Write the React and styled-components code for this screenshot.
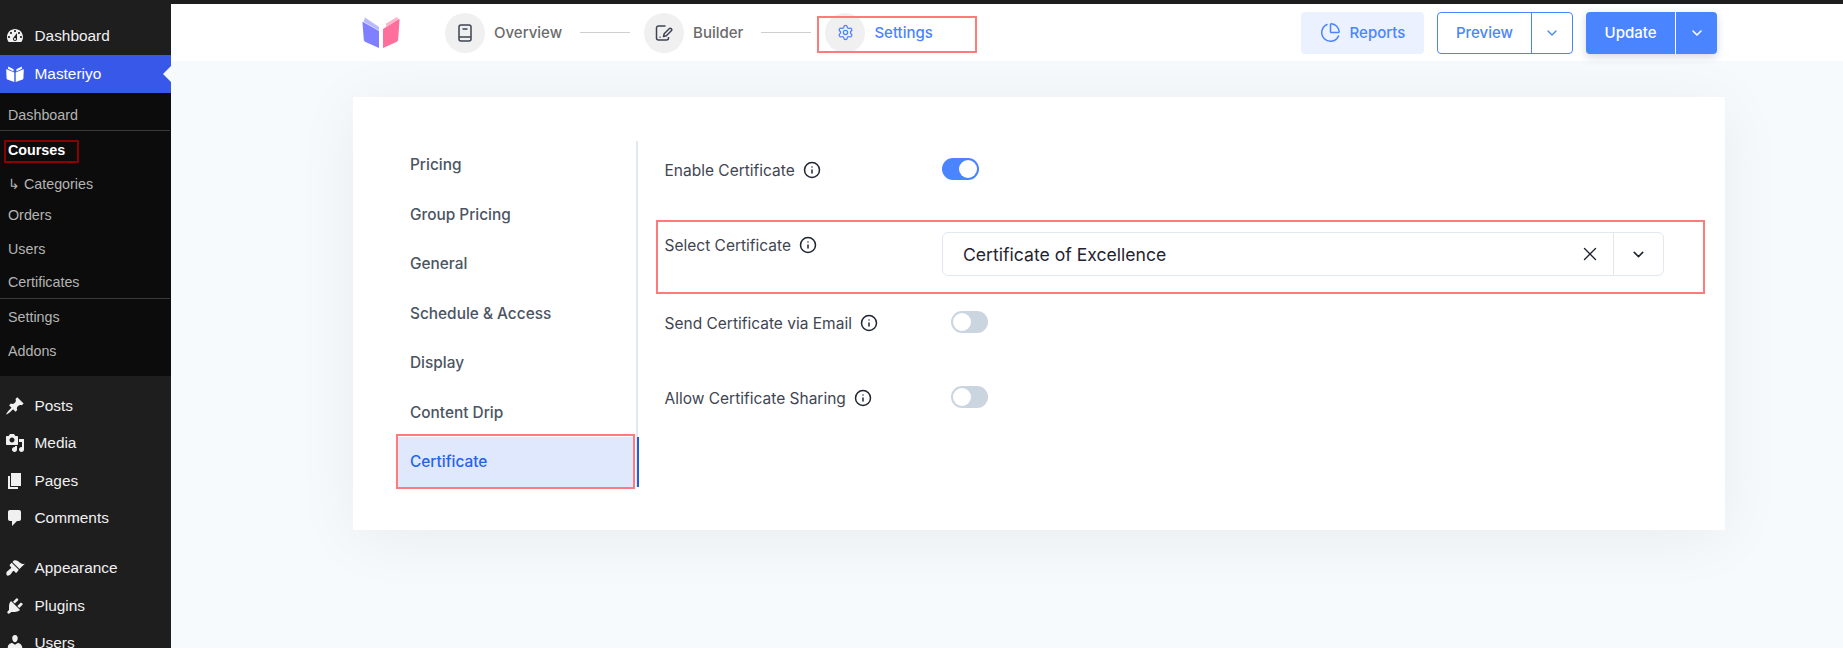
import React from "react";
import styled, { createGlobalStyle } from "styled-components";
import { ChartPie, ChevronDown, Info, Settings, X } from "lucide-react";

const GlobalStyle = createGlobalStyle`
  html, body {
    margin: 0;
    padding: 0;
    height: 100%;
    overflow: hidden;
    background: #f6fafd;
    font-family: "Inter", "Liberation Sans", sans-serif;
  }
  * {
    box-sizing: border-box;
  }
`;

const Page = styled.div`
  display: flex;
  height: 648px;
  overflow: hidden;
`;

/* wp admin menu */
const Sidebar = styled.nav`
  width: 171px;
  flex-shrink: 0;
  background: #1e1e1e;
  padding-top: 17.5px;
  font-family: "Liberation Sans", Arial, sans-serif;
`;

const MenuItem = styled.div`
  position: relative;
  height: ${(props) => props.$height || 37.5}px;
  margin-top: ${(props) => props.$gap || 0}px;
  display: flex;
  align-items: center;
  gap: 9.5px;
  padding-left: 5px;
  font-size: 15.4px;
  color: ${(props) => (props.$active ? "#ffffff" : "#f0f0f1")};
  background: ${(props) => (props.$active ? "#3858e9" : "transparent")};
`;

const MenuIcon = styled.svg`
  width: 20px;
  height: 20px;
  flex-shrink: 0;
  fill: currentColor;
`;

const ActiveArrow = styled.span`
  position: absolute;
  right: 0;
  top: 50%;
  margin-top: -8px;
  border: 8px solid transparent;
  border-right-color: #f6fafd;
  border-left-width: 0;
`;

const SubMenu = styled.div`
  background: #0c0c0c;
  padding: 7px 0 10px;
  margin-bottom: 11px;
`;

const SubItem = styled.div`
  position: relative;
  height: ${(props) => props.$height}px;
  display: flex;
  align-items: center;
  padding-left: 8px;
  font-size: 14.3px;
  font-weight: ${(props) => (props.$current ? 700 : 400)};
  color: ${(props) => (props.$current ? "#ffffff" : "#b4b4b4")};
  border-bottom: ${(props) => (props.$divider ? "1px solid #3c3c3c" : "none")};
  margin-right: ${(props) => (props.$divider ? "1px" : 0)};
`;

const DarkMark = styled.span`
  position: absolute;
  left: 4px;
  top: 9px;
  width: 75px;
  height: 23px;
  border: 2px solid #8b0000;
  border-radius: 1px;
`;

/* right side */
const Main = styled.div`
  flex: 1;
  min-width: 0;
  border-top: 4px solid #1e1e1e;
`;

const Header = styled.header`
  position: relative;
  height: 57px;
  background: #ffffff;
  display: flex;
  align-items: center;
  padding: 0 126px 0 191px;
`;

const Logo = styled.svg`
  width: 38px;
  height: 31px;
  flex-shrink: 0;
  margin-right: 45px;
`;

const Steps = styled.div`
  display: flex;
  align-items: center;
  flex: 1;
`;

const Step = styled.div`
  position: relative;
  display: flex;
  align-items: center;
  gap: 9px;
  font-size: 15px;
  font-weight: 500;
  color: ${(props) => (props.$active ? "#4a84ff" : "#6b6b6b")};
`;

const StepCircle = styled.span`
  width: 40px;
  height: 40px;
  flex-shrink: 0;
  border-radius: 50%;
  background: #f0f0f0;
  display: flex;
  align-items: center;
  justify-content: center;
  color: ${(props) => (props.$active ? "#4a84ff" : "#3d4450")};
`;

const StepLine = styled.span`
  width: 50px;
  height: 1px;
  background: #cfcfcf;
  margin: 0 14px 0 18px;
`;

const SettingsMark = styled.span`
  position: absolute;
  left: -8px;
  top: 3px;
  width: 160px;
  height: 37px;
  border: 2px solid #ff7b7b;
`;

const Actions = styled.div`
  display: flex;
  align-items: center;
  gap: 13px;
`;

const ReportsButton = styled.div`
  width: 123px;
  height: 42px;
  margin-top: 1px;
  padding-bottom: 1px;
  border-radius: 4px;
  background: #ebf1fe;
  color: #4a84ff;
  display: flex;
  align-items: center;
  justify-content: center;
  gap: 9px;
  font-size: 15px;
  font-weight: 500;
`;

const SplitButton = styled.div`
  height: 42px;
  margin-top: 1px;
  display: flex;
  border-radius: 4px;
  overflow: hidden;
  font-size: 15px;
  font-weight: 500;
  border: ${(props) => (props.$solid ? "none" : "1px solid #4a84ff")};
  background: ${(props) => (props.$solid ? "#4a84ff" : "#ffffff")};
  color: ${(props) => (props.$solid ? "#ffffff" : "#4a84ff")};
  box-shadow: ${(props) =>
    props.$solid ? "0 3px 8px rgba(40, 60, 110, 0.2)" : "none"};
`;

const SplitLabel = styled.span`
  width: ${(props) => props.$width}px;
  padding-bottom: 2px;
  display: flex;
  align-items: center;
  justify-content: center;
  border-right: 1px solid ${(props) => (props.$solid ? "#ffffff" : "#4a84ff")};
`;

const SplitArrow = styled.span`
  width: ${(props) => props.$width}px;
  display: flex;
  align-items: center;
  justify-content: center;
`;

const Content = styled.main`
  padding: 36px 118px 0 182px;
`;

const Card = styled.section`
  height: 433px;
  background: #ffffff;
  display: flex;
  padding: 44px 61px 43px 45px;
  box-shadow: 0 8px 60px rgba(0, 0, 0, 0.06);
`;

const Tabs = styled.div`
  width: 240px;
  flex-shrink: 0;
  border-right: 2px solid #e2e8f0;
`;

const TabList = styled.div`
  margin-top: -1px;
`;

const Tab = styled.div`
  position: relative;
  height: 49.5px;
  width: 236px;
  display: flex;
  align-items: center;
  padding-left: 12px;
  font-size: 15.4px;
  font-weight: 500;
  color: ${(props) => (props.$active ? "#2563eb" : "#4b5563")};
  background: ${(props) => (props.$active ? "#dfe8fc" : "transparent")};
`;

const TabBar = styled.span`
  position: absolute;
  left: 239px;
  top: 0;
  width: 2px;
  height: 100%;
  background: #1d5fe0;
`;

const TabMark = styled.span`
  position: absolute;
  left: -2px;
  top: -3px;
  width: 239px;
  height: 55px;
  border: 2px solid #ff7b7b;
`;

const Fields = styled.div`
  flex: 1;
  padding: 16px 0 0 26.5px;
`;

const Field = styled.div`
  position: relative;
  display: flex;
  align-items: ${(props) => (props.$top ? "flex-start" : "center")};
  margin-bottom: ${(props) => props.$after || 0}px;
`;

const FieldLabel = styled.div`
  width: ${(props) => props.$width || 277}px;
  height: 24px;
  padding-top: 2px;
  flex-shrink: 0;
  display: flex;
  align-items: center;
  gap: 8.5px;
  font-size: 15.5px;
  color: #3f4652;
`;

const InfoIcon = styled(Info)`
  width: 18px;
  height: 18px;
  color: #1f2430;
  flex-shrink: 0;
`;

const Toggle = styled.span`
  position: relative;
  width: 37px;
  height: 22px;
  border-radius: 11px;
  background: ${(props) => (props.$on ? "#4a84ff" : "#cbd5e0")};
  &::after {
    content: "";
    position: absolute;
    top: 2px;
    left: ${(props) => (props.$on ? "17px" : "2px")};
    width: 18px;
    height: 18px;
    border-radius: 50%;
    background: #ffffff;
  }
`;

const Select = styled.div`
  flex: 1;
  height: 44px;
  border: 1px solid #e2e8f0;
  border-radius: 6px;
  display: flex;
  align-items: center;
  padding-left: 20.5px;
  font-size: 17.6px;
  color: #1f2430;
`;

const SelectValue = styled.span`
  flex: 1;
`;

const SelectClear = styled.span`
  width: 52px;
  height: 100%;
  display: flex;
  align-items: center;
  justify-content: center;
  padding-left: 6px;
  color: #1f2430;
`;

const SelectArrow = styled.span`
  width: 50px;
  height: 100%;
  display: flex;
  align-items: center;
  justify-content: center;
  border-left: 1px solid #e2e8f0;
  color: #1f2430;
`;

const SelectMark = styled.span`
  position: absolute;
  left: -9px;
  top: -12px;
  right: -41px;
  bottom: -18px;
  border: 2px solid #ff7b7b;
  pointer-events: none;
`;

const icons = {
  dashboard:
    "M3.76 16h12.48c1.1-1.37 1.76-3.11 1.76-5 0-4.42-3.58-8-8-8s-8 3.58-8 8c0 1.89.66 3.63 1.76 5zM10 4c.55 0 1 .45 1 1s-.45 1-1 1-1-.45-1-1 .45-1 1-1zM6 6c.55 0 1 .45 1 1s-.45 1-1 1-1-.45-1-1 .45-1 1-1zm8 0c.55 0 1 .45 1 1s-.45 1-1 1-1-.45-1-1 .45-1 1-1zm-5.37 5.55L12 7v6c0 1.1-.9 2-2 2s-2-.9-2-2c0-.57.24-1.08.63-1.45zM4 10c.55 0 1 .45 1 1s-.45 1-1 1-1-.45-1-1 .45-1 1-1zm12 0c.55 0 1 .45 1 1s-.45 1-1 1-1-.45-1-1 .45-1 1-1zm-5 3c0-.55-.45-1-1-1s-1 .45-1 1 .45 1 1 1 1-.45 1-1z",
  book: "M1.2 5.6 Q1 5 1.7 5.2 L9.3 8.6 V18 L2.3 15.4 Q1.6 15.1 1.6 14.4 Z M18.8 5.6 Q19 5 18.3 5.2 L10.7 8.6 V18 L17.7 15.4 Q18.4 15.1 18.4 14.4 Z M3.2 2.4 L8.6 5.2 V7.6 L3 4.7 Z M16.8 2.4 L11.4 5.2 V7.6 L17 4.7 Z",
  post: "M10.44 3.02l1.82-1.82 6.36 6.35-1.83 1.82c-1.05-.68-2.48-.57-3.41.36l-.75.75c-.92.93-1.04 2.35-.35 3.41l-1.83 1.82-2.41-2.41-2.8 2.79c-.42.42-3.38 2.71-3.8 2.29s1.86-3.39 2.28-3.81l2.79-2.79L4.1 9.36l1.83-1.82c1.05.69 2.48.57 3.4-.36l.75-.75c.93-.92 1.05-2.35.36-3.41z",
  media:
    "M13 11V4c0-.55-.45-1-1-1h-1.67L9 1H5L3.67 3H2c-.55 0-1 .45-1 1v7c0 .55.45 1 1 1h10c.55 0 1-.45 1-1zM7 4.5c1.38 0 2.5 1.12 2.5 2.5S8.38 9.5 7 9.5 4.5 8.38 4.5 7 5.62 4.5 7 4.5zM14 6h5v10.5c0 1.38-1.12 2.5-2.5 2.5S14 17.88 14 16.5s1.12-2.5 2.5-2.5c.17 0 .34.02.5.05V9h-3V6zm-4 8.05V13h2v3.5c0 1.38-1.12 2.5-2.5 2.5S7 17.88 7 16.5 8.12 14 9.5 14c.17 0 .34.02.5.05z",
  page: "M6 15V2h10v13H6zm-1 1h8v2H3V5h2v11z",
  comments:
    "M5 2h9c1.1 0 2 .9 2 2v7c0 1.1-.9 2-2 2h-2l-5 5v-5H5c-1.1 0-2-.9-2-2V4c0-1.1.9-2 2-2z",
  appearance:
    "M14.48 11.06L7.41 3.99l1.5-1.5c.5-.56 2.3-.47 3.51.32 1.21.8 1.43 1.28 2.91 2.1 1.18.64 2.45 1.26 4.45.85zm-.71.71L6.7 4.7 4.93 6.47c-.39.39-.39 1.02 0 1.41l1.06 1.06c.39.39.39 1.03 0 1.42-.6.6-1.43 1.11-2.21 1.69-.35.26-.7.53-1.01.84C1.43 13.23.91 15.06 1.7 17.3c.9.9 2.68.26 3.69-.75.31-.31.58-.66.84-1.01.58-.78 1.09-1.61 1.69-2.21.39-.39 1.02-.39 1.41 0l1.06 1.06c.39.39 1.02.39 1.41 0z",
  plugins:
    "M13.11 4.36L9.87 7.6 8 5.73l3.24-3.24c.35-.34 1.05-.2 1.56.32.52.51.66 1.21.31 1.55zm-8 1.77l.91-1.12 9.01 9.01-1.19.84c-.71.71-2.63 1.16-3.82 1.16H6.14L4.9 17.26c-.59.59-1.54.59-2.12 0-.59-.58-.59-1.53 0-2.12l1.24-1.24v-3.88c0-1.13.4-3.19 1.09-3.89zm7.26 3.97l3.24-3.24c.34-.35 1.04-.21 1.55.31.52.51.66 1.21.31 1.55l-3.24 3.25z",
  users:
    "M10 9.25c-2.27 0-2.73-3.44-2.73-3.44C7 4.02 7.82 2 9.97 2c2.16 0 2.98 2.02 2.71 3.81 0 0-.41 3.44-2.68 3.44zm0 2.57L12.72 10c2.39 0 4.52 2.33 4.52 4.53v2.49s-3.65 1.13-7.24 1.13c-3.65 0-7.24-1.13-7.24-1.13v-2.49c0-2.25 1.94-4.48 4.47-4.48z",
};

const menuItems = [
  { label: "Posts", icon: "post" },
  { label: "Media", icon: "media" },
  { label: "Pages", icon: "page" },
  { label: "Comments", icon: "comments" },
  { label: "Appearance", icon: "appearance", gap: 12.5 },
  { label: "Plugins", icon: "plugins" },
  { label: "Users", icon: "users" },
];

const tabs = [
  "Pricing",
  "Group Pricing",
  "General",
  "Schedule & Access",
  "Display",
  "Content Drip",
];

const WpIcon = ({ name }) => (
  <MenuIcon viewBox="0 0 20 20">
    <path d={icons[name]} />
  </MenuIcon>
);

const OverviewIcon = () => (
  <svg width="14" height="18" viewBox="0 0 14 18" fill="none" stroke="currentColor" strokeWidth="1.5">
    <rect x="1" y="1" width="12" height="16" rx="2" />
    <path d="M1 13h12M4.5 5h5" />
  </svg>
);

const BuilderIcon = () => (
  <svg width="18" height="16" viewBox="0 0 18 16" fill="none" stroke="currentColor" strokeWidth="1.5" strokeLinejoin="round">
    <path d="M10.5 1H3.5a2 2 0 0 0-2 2v10a2 2 0 0 0 2 2h8a2 2 0 0 0 2-2v-1" />
    <path d="M8.5 11.5l.7-2.8 5-5a1.4 1.4 0 0 1 2.1 2.1l-5 5z" />
    <path d="M4.5 12.2h1" />
  </svg>
);

const SiteLogo = () => (
  <Logo viewBox="0 0 38 31">
    <path d="M0.5 6 Q0 4.6 1.5 5.2 L17 14 V31 L3.5 25 Q2 24.3 1.8 22.5 Z" fill="#7f7fff" />
    <path d="M37.5 3 Q38 1.6 36.5 2.2 L21 12 V31 L34.5 25 Q36 24.3 36.2 22.5 Z" fill="#ff6f9c" />
    <path d="M3 0.5 L17 10 V13.5 L1.5 4.7 Z" fill="#b9b9ff" />
    <path d="M35 0 L24 6.5 V10.5 L36.5 2 Z" fill="#ffb4cb" />
  </Logo>
);

export default function App() {
  return (
    <Page>
      <GlobalStyle />
      <Sidebar>
        <MenuItem $height={37.5}>
          <WpIcon name="dashboard" />
          Dashboard
        </MenuItem>
        <MenuItem $active $height={38}>
          <WpIcon name="book" />
          Masteriyo
          <ActiveArrow />
        </MenuItem>
        <SubMenu>
          <SubItem $height={31} $divider>Dashboard</SubItem>
          <SubItem $height={38} $current>
            Courses
            <DarkMark />
          </SubItem>
          <SubItem $height={29}>↳ Categories</SubItem>
          <SubItem $height={33.5}>Orders</SubItem>
          <SubItem $height={34.5}>Users</SubItem>
          <SubItem $height={33} $divider>Certificates</SubItem>
          <SubItem $height={36.5}>Settings</SubItem>
          <SubItem $height={30.5}>Addons</SubItem>
        </SubMenu>
        {menuItems.map((item) => (
          <MenuItem key={item.label} $gap={item.gap}>
            <WpIcon name={item.icon} />
            {item.label}
          </MenuItem>
        ))}
      </Sidebar>
      <Main>
        <Header>
          <SiteLogo />
          <Steps>
            <Step>
              <StepCircle>
                <OverviewIcon />
              </StepCircle>
              Overview
            </Step>
            <StepLine />
            <Step>
              <StepCircle>
                <BuilderIcon />
              </StepCircle>
              Builder
            </Step>
            <StepLine />
            <Step $active>
              <StepCircle $active>
                <Settings size={17} strokeWidth={1.8} />
              </StepCircle>
              Settings
              <SettingsMark />
            </Step>
          </Steps>
          <Actions>
            <ReportsButton>
              <ChartPie size={21} strokeWidth={1.7} />
              Reports
            </ReportsButton>
            <SplitButton>
              <SplitLabel $width={94}>Preview</SplitLabel>
              <SplitArrow $width={40}>
                <ChevronDown size={16} strokeWidth={2} />
              </SplitArrow>
            </SplitButton>
            <SplitButton $solid>
              <SplitLabel $solid $width={90}>Update</SplitLabel>
              <SplitArrow $width={41}>
                <ChevronDown size={16} strokeWidth={2.4} />
              </SplitArrow>
            </SplitButton>
          </Actions>
        </Header>
        <Content>
          <Card>
            <Tabs>
              <TabList>
                {tabs.map((tab) => (
                  <Tab key={tab}>{tab}</Tab>
                ))}
                <Tab $active>
                  Certificate
                  <TabBar />
                  <TabMark />
                </Tab>
              </TabList>
            </Tabs>
            <Fields>
              <Field $after={51}>
                <FieldLabel>
                  Enable Certificate
                  <InfoIcon />
                </FieldLabel>
                <Toggle $on />
              </Field>
              <Field $top $after={34}>
                <FieldLabel>
                  Select Certificate
                  <InfoIcon />
                </FieldLabel>
                <Select>
                  <SelectValue>Certificate of Excellence</SelectValue>
                  <SelectClear>
                    <X size={22} strokeWidth={1.5} />
                  </SelectClear>
                  <SelectArrow>
                    <ChevronDown size={17} strokeWidth={2.2} />
                  </SelectArrow>
                </Select>
                <SelectMark />
              </Field>
              <Field $after={51}>
                <FieldLabel $width={286}>
                  Send Certificate via Email
                  <InfoIcon />
                </FieldLabel>
                <Toggle />
              </Field>
              <Field>
                <FieldLabel $width={286}>
                  Allow Certificate Sharing
                  <InfoIcon />
                </FieldLabel>
                <Toggle />
              </Field>
            </Fields>
          </Card>
        </Content>
      </Main>
    </Page>
  );
}
